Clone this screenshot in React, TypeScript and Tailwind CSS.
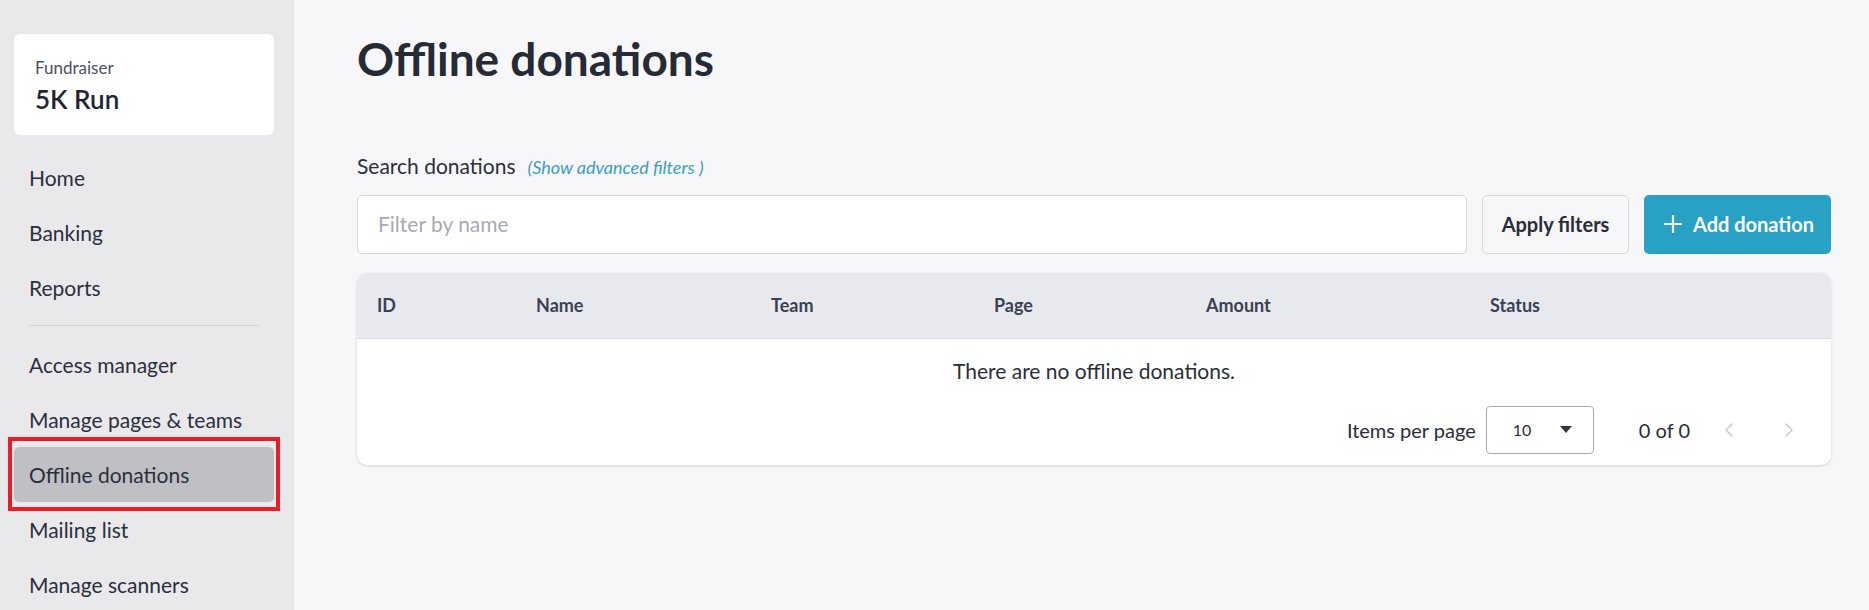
import { ChevronLeft, ChevronRight } from "lucide-react";

const topNav = ["Home", "Banking", "Reports"];
const bottomNav = ["Access manager", "Manage pages & teams", "Offline donations", "Mailing list", "Manage scanners"];
const columns = ["ID", "Name", "Team", "Page", "Amount", "Status"];

function NavItem({ label, active }: { label: string; active?: boolean }) {
  if (active) {
    return (
      <div className="relative">
        <div className="flex h-[55px] items-center rounded-[5px] bg-[#c0c0c4] pl-[15px] text-[21px] text-[#2b2f3d]">
          {label}
        </div>
        {/* red annotation box */}
        <div className="pointer-events-none absolute -top-[10px] -right-[6px] -bottom-[9px] -left-[6px] border-4 border-[#ed1c24]" />
      </div>
    );
  }
  return (
    <div className="flex h-[55px] items-center pl-[15px] text-[21px] text-[#2b2f3d]">{label}</div>
  );
}

export default function App() {
  return (
    <div
      className="flex h-[610px] w-full overflow-hidden bg-[#f7f7f9]"
      style={{ fontFamily: "Lato, 'Open Sans', sans-serif" }}
    >
      {/* Sidebar */}
      <aside className="w-[294px] shrink-0 bg-[#e9e9ec] pt-[34px] pr-[20px] pl-[14px]">
        <div className="h-[101px] rounded-[6px] bg-white pt-[23px] pl-[21px]">
          <div className="text-[17px] leading-[22px] text-[#4b5166]">Fundraiser</div>
          <div className="mt-[4px] text-[26px] leading-[32px] font-semibold text-[#22252f]">5K Run</div>
        </div>
        <nav className="mt-[15px]">
          {topNav.map((l) => (
            <NavItem key={l} label={l} />
          ))}
          <div className="mt-[10px] mb-[11px] ml-[15px] h-px w-[230px] bg-[#d3d4da]" />
          {bottomNav.map((l) => (
            <NavItem key={l} label={l} active={l === "Offline donations"} />
          ))}
        </nav>
      </aside>

      {/* Main */}
      <main className="flex-1 pr-[38px] pl-[63px]">
        <h1 className="mt-[36px] text-[46px] leading-none font-bold text-[#262a35]">Offline donations</h1>

        <div className="mt-[68px] flex items-baseline gap-[12px]">
          <span className="text-[21px] text-[#2b2f3d]">Search donations</span>
          <span className="text-[18px] text-[#3a9fc2] italic">(Show advanced filters )</span>
        </div>

        <div className="mt-[13px] flex h-[59px] gap-[15px]">
          <div className="flex flex-1 items-center rounded-[5px] border border-[#d5d6dc] bg-white pl-[20px] text-[21px] text-[#a8aab3]">
            Filter by name
          </div>
          <button
            type="button"
            className="w-[147px] rounded-[5px] border border-[#d8d9de] bg-[#f7f7f9] text-[20px] font-bold text-[#2a2d38]"
          >
            Apply filters
          </button>
          <button
            type="button"
            className="flex w-[187px] items-center gap-[10px] rounded-[5px] bg-[#29a1c4] pl-[19px] text-[20px] font-bold text-white"
          >
            <svg width="20" height="20" viewBox="0 0 20 20" fill="none" stroke="currentColor" strokeWidth="2.2">
              <path d="M10 1v18M1 10h18" />
            </svg>
            Add donation
          </button>
        </div>

        {/* Table card */}
        <div className="mt-[19px] overflow-hidden rounded-[10px] bg-white shadow-[0_1px_3px_rgba(0,0,0,0.15)]">
          <div className="grid h-[66px] grid-cols-[159px_235px_223px_212px_284px_1fr] items-center border-b border-[#dcdde2] bg-[#e8e9ee] pl-[20px] text-[18px] font-bold text-[#3b4154]">
            {columns.map((c) => (
              <div key={c}>{c}</div>
            ))}
          </div>
          <div className="pt-[19px] text-center text-[21px] leading-[26px] text-[#2a2d38]">
            There are no offline donations.
          </div>
          <div className="mt-[22px] flex items-center justify-end pr-[30px] pb-[11px] text-[20px] text-[#2a2d38]">
            <span>Items per page</span>
            <div className="ml-[10px] flex h-[48px] w-[108px] items-center rounded-[4px] border border-[#a9abb3] pl-[26px]">
              <span className="text-[16px]">10</span>
              <svg className="ml-[29px]" width="12" height="7" viewBox="0 0 12 7" fill="#33363f">
                <path d="M0 0h12L6 7z" />
              </svg>
            </div>
            <span className="ml-[45px]">0 of 0</span>
            <ChevronLeft className="ml-[27px] text-[#c9cace]" size={24} strokeWidth={1.5} />
            <ChevronRight className="ml-[36px] text-[#c9cace]" size={24} strokeWidth={1.5} />
          </div>
        </div>
      </main>
    </div>
  );
}
